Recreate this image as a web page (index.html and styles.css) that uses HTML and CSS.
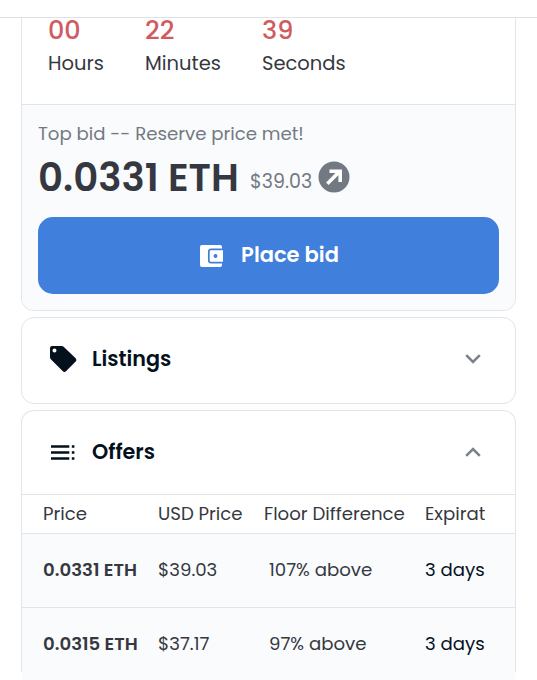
FILE: index.html
```
<!DOCTYPE html>
<html lang="en">
<head>
    <meta charset="UTF-8">
    <meta name="viewport" content="width=device-width, initial-scale=1.0">
    <title>Place bid</title>
    <link rel="stylesheet" href="styles.css">
</head>
<body>
    <header class="topbar"></header>
    <main class="page">
        <section class="card auction">
            <div class="timer">
                <div class="unit hours">
                    <div class="number">00</div>
                    <div class="label">Hours</div>
                </div>
                <div class="unit minutes">
                    <div class="number">22</div>
                    <div class="label">Minutes</div>
                </div>
                <div class="unit seconds">
                    <div class="number">39</div>
                    <div class="label">Seconds</div>
                </div>
            </div>
            <div class="bid">
                <div class="bid-title">Top bid -- Reserve price met!</div>
                <div class="bid-price">
                    <span class="eth">0.0331 ETH</span>
                    <span class="usd">$39.03</span>
                    <svg class="arrow" viewBox="0 0 32 32">
                        <circle cx="16" cy="16" r="15.5" fill="#737982"/>
                        <path d="M9.3 22.7L21.5 10.5M11.5 10.2h10.7v10.7" fill="none" stroke="#fff" stroke-width="3.6"/>
                    </svg>
                </div>
                <button class="bid-button">
                    <svg class="wallet" viewBox="0 0 24 24">
                        <path fill="#fff" d="M3 1h18a2 2 0 0 1 2 2v1.5H12a3 3 0 0 0-3 3v9a3 3 0 0 0 3 3h11V21a2 2 0 0 1-2 2H3a2 2 0 0 1-2-2V3a2 2 0 0 1 2-2z"/>
                        <path fill="#fff" fill-rule="evenodd" d="M12 6.2h12v11.6H12a1.3 1.3 0 0 1-1.3-1.3v-9A1.3 1.3 0 0 1 12 6.2zM16.5 10a2 2 0 1 0 0 4 2 2 0 0 0 0-4z"/>
                    </svg>
                    <span>Place bid</span>
                </button>
            </div>
        </section>

        <section class="card closed">
            <div class="card-header">
                <svg class="icon" viewBox="0 0 28 28">
                    <path fill="#04111d" fill-rule="evenodd" d="M3 1h9.6a3 3 0 0 1 2 .8l11.8 11.3a2.5 2.5 0 0 1 0 3.6l-9.2 9.4a2.5 2.5 0 0 1-3.6 0L1.8 14.3A3 3 0 0 1 1 12.3V3a2 2 0 0 1 2-2zM5.5 3.5a2 2 0 1 0 0 4 2 2 0 0 0 0-4z"/>
                </svg>
                <h2>Listings</h2>
                <svg class="chevron" viewBox="0 0 16 10">
                    <path d="M1.2 1.2L8 8l6.8-6.8" fill="none" stroke="#7c828a" stroke-width="2.6"/>
                </svg>
            </div>
        </section>

        <section class="card offers">
            <div class="card-header">
                <svg class="icon" viewBox="0 0 28 28">
                    <path d="M2 8.5h18.3M2 14.5h18.3M2 20.5h18.3M22.8 8.5h2.6M22.8 14.5h2.6M22.8 20.5h2.6" stroke="#04111d" stroke-width="2.5"/>
                </svg>
                <h2>Offers</h2>
                <svg class="chevron" viewBox="0 0 16 10">
                    <path d="M1.2 8.8L8 2l6.8 6.8" fill="none" stroke="#7c828a" stroke-width="2.6"/>
                </svg>
            </div>
            <div class="row row-head">
                <span>Price</span>
                <span>USD Price</span>
                <span>Floor Difference</span>
                <span class="expires">Expiration</span>
            </div>
            <div class="row">
                <span class="price">0.0331 ETH</span>
                <span>$39.03</span>
                <span class="floor">107% above</span>
                <span class="expires">3 days</span>
            </div>
            <div class="row">
                <span class="price">0.0315 ETH</span>
                <span>$37.17</span>
                <span class="floor">97% above</span>
                <span class="expires">3 days</span>
            </div>
        </section>
    </main>
</body>
</html>
```
FILE: styles.css
```
* {
    box-sizing: border-box;
}

body {
    margin: 0;
    height: 680px;
    overflow: hidden;
    background-color: #fff;
    color: #353840;
    font-family: Poppins, Inter, sans-serif;
    font-size: 18.15px;
}

.topbar {
    height: 18px;
    border-bottom: 1px solid #e0e1e7;
}

.page {
    display: flex;
    flex-direction: column;
    gap: 6px;
    padding: 0 21px;
}

.card {
    border: 1px solid #e2e4ea;
    border-radius: 13px;
}

/* Auction */
.auction {
    height: 293px;
    border-top: none;
    border-radius: 0 0 13px 13px;
}

.timer {
    display: flex;
    height: 87px;
    padding-left: 26px;
    border-bottom: 1px solid #e2e4ea;
}

.unit {
    width: 97px;
}

.minutes {
    width: 117px;
}

.number {
    height: 29px;
    line-height: 24px;
    font-size: 25.5px;
    font-weight: 500;
    color: #d05c60;
}

.label {
    font-size: 19.5px;
    line-height: 34px;
}

.bid {
    height: 205px;
    padding: 16px 16px 0;
    border-radius: 0 0 12px 12px;
    background-color: #fafbfd;
}

.bid-title {
    line-height: 26px;
    color: #737982;
}

.bid-price {
    display: flex;
    align-items: center;
    height: 61px;
    margin-bottom: 9px;
    line-height: 61px;
}

.eth {
    width: 212px;
    font-size: 38.8px;
    font-weight: 600;
    white-space: nowrap;
}

.usd {
    width: 68px;
    padding-top: 7px;
    font-size: 19px;
    color: #737982;
}

.arrow {
    width: 32px;
    height: 32px;
    margin-bottom: 2px;
}

.bid-button {
    display: flex;
    justify-content: center;
    align-items: center;
    gap: 18px;
    width: 100%;
    height: 77px;
    padding: 0 0 2px 1px;
    border: none;
    border-radius: 15px;
    background-color: #407fdb;
    color: #fff;
    font-family: inherit;
    font-size: 21px;
    font-weight: 600;
}

.wallet {
    width: 24px;
    height: 24px;
    margin-top: 2px;
}

/* Collapsible cards */
.closed {
    height: 87px;
}

.card-header {
    display: flex;
    align-items: center;
    height: 83px;
    padding: 0 34px 2px 27px;
}

.icon {
    width: 28px;
    height: 28px;
    margin-right: 15px;
}

h2 {
    flex: 1;
    margin: 0;
    font-size: 20.7px;
    font-weight: 600;
    color: #04111d;
}

.chevron {
    width: 16px;
    height: 10px;
}

.offers {
    height: 262px;
    border-bottom: none;
    border-radius: 13px 13px 0 0;
}

/* Offers table */
.row {
    display: grid;
    grid-template-columns: 115px 106px 161px 60px;
    align-items: center;
    height: 74px;
    padding: 0 0 2px 21px;
    border-top: 1px solid #e2e4ea;
    background-color: #fafbfd;
    white-space: nowrap;
}

.row-head {
    height: 39px;
    background-color: #fff;
}

.price {
    font-weight: 600;
}

.floor {
    padding-left: 5px;
}

.expires {
    overflow: hidden;
}

.row:not(.row-head) .expires {
    color: #04111d;
}
```
